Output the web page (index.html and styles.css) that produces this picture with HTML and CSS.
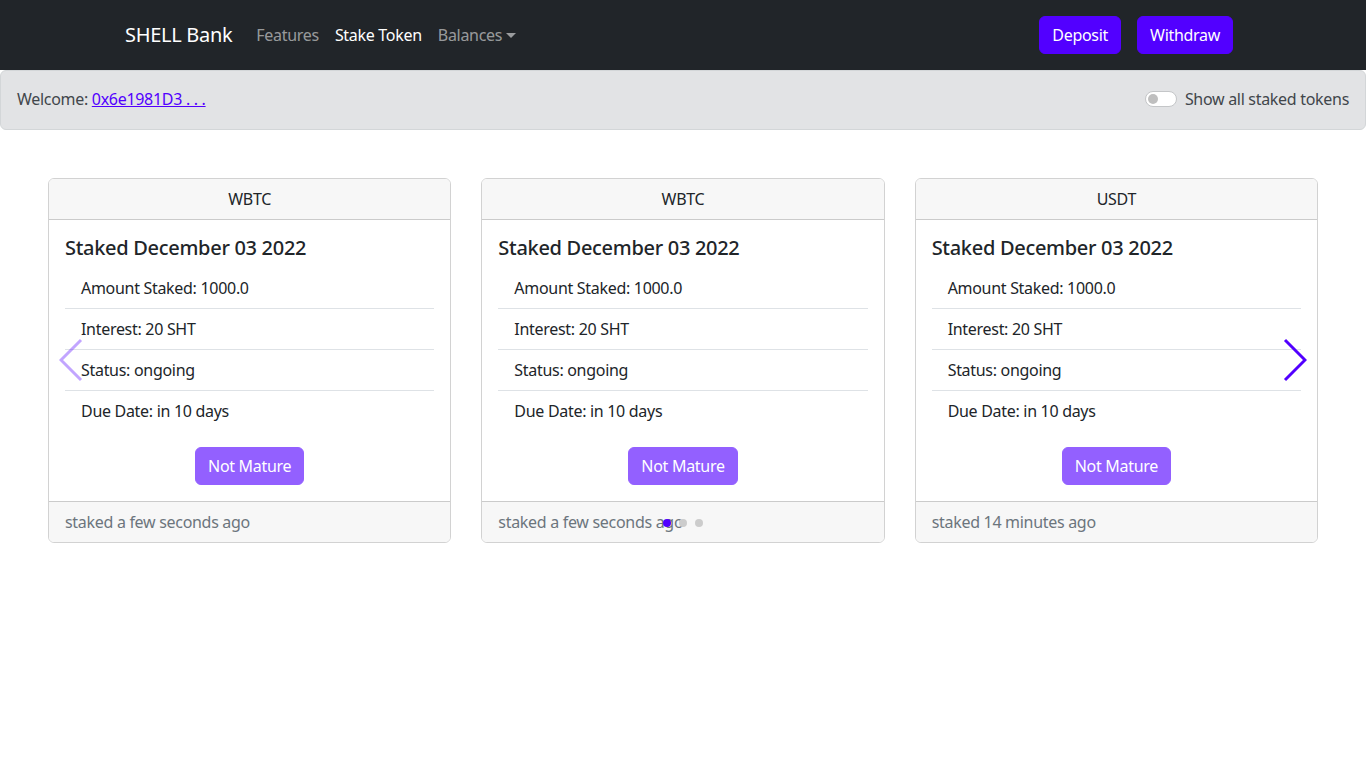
FILE: index.html
```html
<!DOCTYPE html>
<html lang="en">
<head>
<meta charset="utf-8">
<title>SHELL Bank</title>
<link rel="stylesheet" href="styles.css">
</head>
<body>
<nav class="navbar">
  <div class="container nav-inner">
    <a class="brand" href="#">SHELL Bank</a>
    <ul class="nav-links">
      <li><a class="nav-link" href="#">Features</a></li>
      <li><a class="nav-link active" href="#">Stake Token</a></li>
      <li><a class="nav-link dropdown" href="#">Balances<span class="caret"></span></a></li>
    </ul>
    <div class="nav-actions">
      <button class="btn btn-primary">Deposit</button>
      <button class="btn btn-primary">Withdraw</button>
    </div>
  </div>
</nav>

<div class="welcome-bar">
  <div class="welcome">Welcome: <a href="#">0x6e1981D3 . . .</a></div>
  <label class="switch-label"><span class="switch"><span class="knob"></span></span>Show all staked tokens</label>
</div>

<div class="carousel">
  <div class="cards">
    <div class="card">
      <div class="card-header">WBTC</div>
      <div class="card-body">
        <h5 class="card-title">Staked December 03 2022</h5>
        <ul class="list">
          <li>Amount Staked: 1000.0</li>
          <li>Interest: 20 SHT</li>
          <li>Status: ongoing</li>
          <li>Due Date: in 10 days</li>
        </ul>
        <div class="center"><button class="btn btn-disabled">Not Mature</button></div>
      </div>
      <div class="card-footer">staked a few seconds ago</div>
    </div>
    <div class="card">
      <div class="card-header">WBTC</div>
      <div class="card-body">
        <h5 class="card-title">Staked December 03 2022</h5>
        <ul class="list">
          <li>Amount Staked: 1000.0</li>
          <li>Interest: 20 SHT</li>
          <li>Status: ongoing</li>
          <li>Due Date: in 10 days</li>
        </ul>
        <div class="center"><button class="btn btn-disabled">Not Mature</button></div>
      </div>
      <div class="card-footer">staked a few seconds ago</div>
    </div>
    <div class="card">
      <div class="card-header">USDT</div>
      <div class="card-body">
        <h5 class="card-title">Staked December 03 2022</h5>
        <ul class="list">
          <li>Amount Staked: 1000.0</li>
          <li>Interest: 20 SHT</li>
          <li>Status: ongoing</li>
          <li>Due Date: in 10 days</li>
        </ul>
        <div class="center"><button class="btn btn-disabled">Not Mature</button></div>
      </div>
      <div class="card-footer">staked 14 minutes ago</div>
    </div>
  </div>
  <button class="arrow arrow-prev" aria-label="previous">
    <svg width="24" height="44" viewBox="0 0 24 44"><polyline points="22,2 2,22 22,42" fill="none" stroke="currentColor" stroke-width="3"/></svg>
  </button>
  <button class="arrow arrow-next" aria-label="next">
    <svg width="24" height="44" viewBox="0 0 24 44"><polyline points="2,2 22,22 2,42" fill="none" stroke="currentColor" stroke-width="3"/></svg>
  </button>
  <ul class="dots">
    <li class="dot active"></li>
    <li class="dot"></li>
    <li class="dot"></li>
  </ul>
</div>
</body>
</html>
```

FILE: styles.css
```css
* { box-sizing: border-box; }
body {
  margin: 0;
  font-family: "Noto Sans", "DejaVu Sans", sans-serif;
  font-size: 16px;
  line-height: 1.5;
  letter-spacing: -0.3px;
  color: #212529;
  background: #fff;
}
.navbar {
  background: #212529;
  padding: 16px 0;
}
.container {
  max-width: 1140px;
  margin: 0 auto;
  padding: 0 12px;
}
.nav-inner {
  display: flex;
  align-items: center;
  height: 38px;
}
.brand {
  color: #fff;
  font-size: 20px;
  text-decoration: none;
  margin-right: 16px;
  line-height: 30px;
}
.nav-links {
  display: flex;
  list-style: none;
  margin: 0;
  padding: 0;
  flex: 1;
}
.nav-link {
  display: block;
  padding: 8px;
  color: rgba(255,255,255,.55);
  text-decoration: none;
}
.nav-link.active { color: #fff; }
.caret {
  display: inline-block;
  margin-left: 4px;
  vertical-align: 3px;
  border-top: 5px solid;
  border-left: 5px solid transparent;
  border-right: 5px solid transparent;
}
.nav-actions {
  display: flex;
  gap: 16px;
  margin-right: 8px;
}
.btn {
  font-family: inherit;
  font-size: 16px;
  letter-spacing: inherit;
  line-height: 24px;
  padding: 6px 12px;
  border: 1px solid transparent;
  border-radius: 6px;
  color: #fff;
  cursor: pointer;
}
.btn-primary { background: #5200ff; border-color: #5200ff; }
.btn-disabled { background: #5200ff; border-color: #5200ff; opacity: .62; cursor: default; }

.welcome-bar {
  display: flex;
  justify-content: space-between;
  align-items: flex-start;
  padding: 16px 16px 18px;
  background: #e2e3e5;
  border: 1px solid #d3d6d8;
  border-radius: 6px;
  color: #41464b;
}
.welcome a { color: #5200ff; }
.switch-label {
  display: flex;
  align-items: center;
  gap: 8px;
}
.switch {
  display: inline-block;
  width: 32px;
  height: 16px;
  border: 1px solid #c4c6c8;
  border-radius: 8px;
  background: #fff;
  padding: 2px;
}
.knob {
  display: block;
  width: 10px;
  height: 10px;
  border-radius: 50%;
  background: #bfbfbf;
}

.carousel {
  position: relative;
  margin-top: 48px;
  padding: 0 48px;
}
.cards {
  display: grid;
  grid-template-columns: repeat(3, 1fr);
  gap: 30px;
}
.card {
  border: 1px solid rgba(0,0,0,.175);
  border-radius: 6px;
  overflow: hidden;
}
.card-header {
  text-align: center;
  padding: 8px 16px;
  background: #f7f7f7;
  border-bottom: 1px solid rgba(0,0,0,.175);
}
.card-body { padding: 16px; }
.card-title {
  margin: 0 0 8px;
  font-size: 20px;
  font-weight: 500;
  line-height: 1.2;
}
.list {
  list-style: none;
  margin: 0 0 16px;
  padding: 0;
}
.list li {
  padding: 8px 16px;
  border-bottom: 1px solid #dee2e6;
}
.list li:last-child { border-bottom: 0; }
.center { text-align: center; }
.card-footer {
  padding: 8px 16px;
  background: #f7f7f7;
  border-top: 1px solid rgba(0,0,0,.175);
  color: #6c757d;
}
.arrow {
  position: absolute;
  top: 160px;
  background: none;
  border: 0;
  padding: 0;
  color: #5200ff;
  line-height: 0;
}
.arrow-prev { left: 59px; opacity: .35; }
.arrow-next { right: 59px; }
.dots {
  position: absolute;
  left: 0;
  right: 0;
  bottom: 16px;
  display: flex;
  justify-content: center;
  gap: 8px;
  list-style: none;
  margin: 0;
  padding: 0;
}
.dot {
  width: 8px;
  height: 8px;
  border-radius: 50%;
  background: #ccc;
}
.dot.active { background: #5200ff; }
```
